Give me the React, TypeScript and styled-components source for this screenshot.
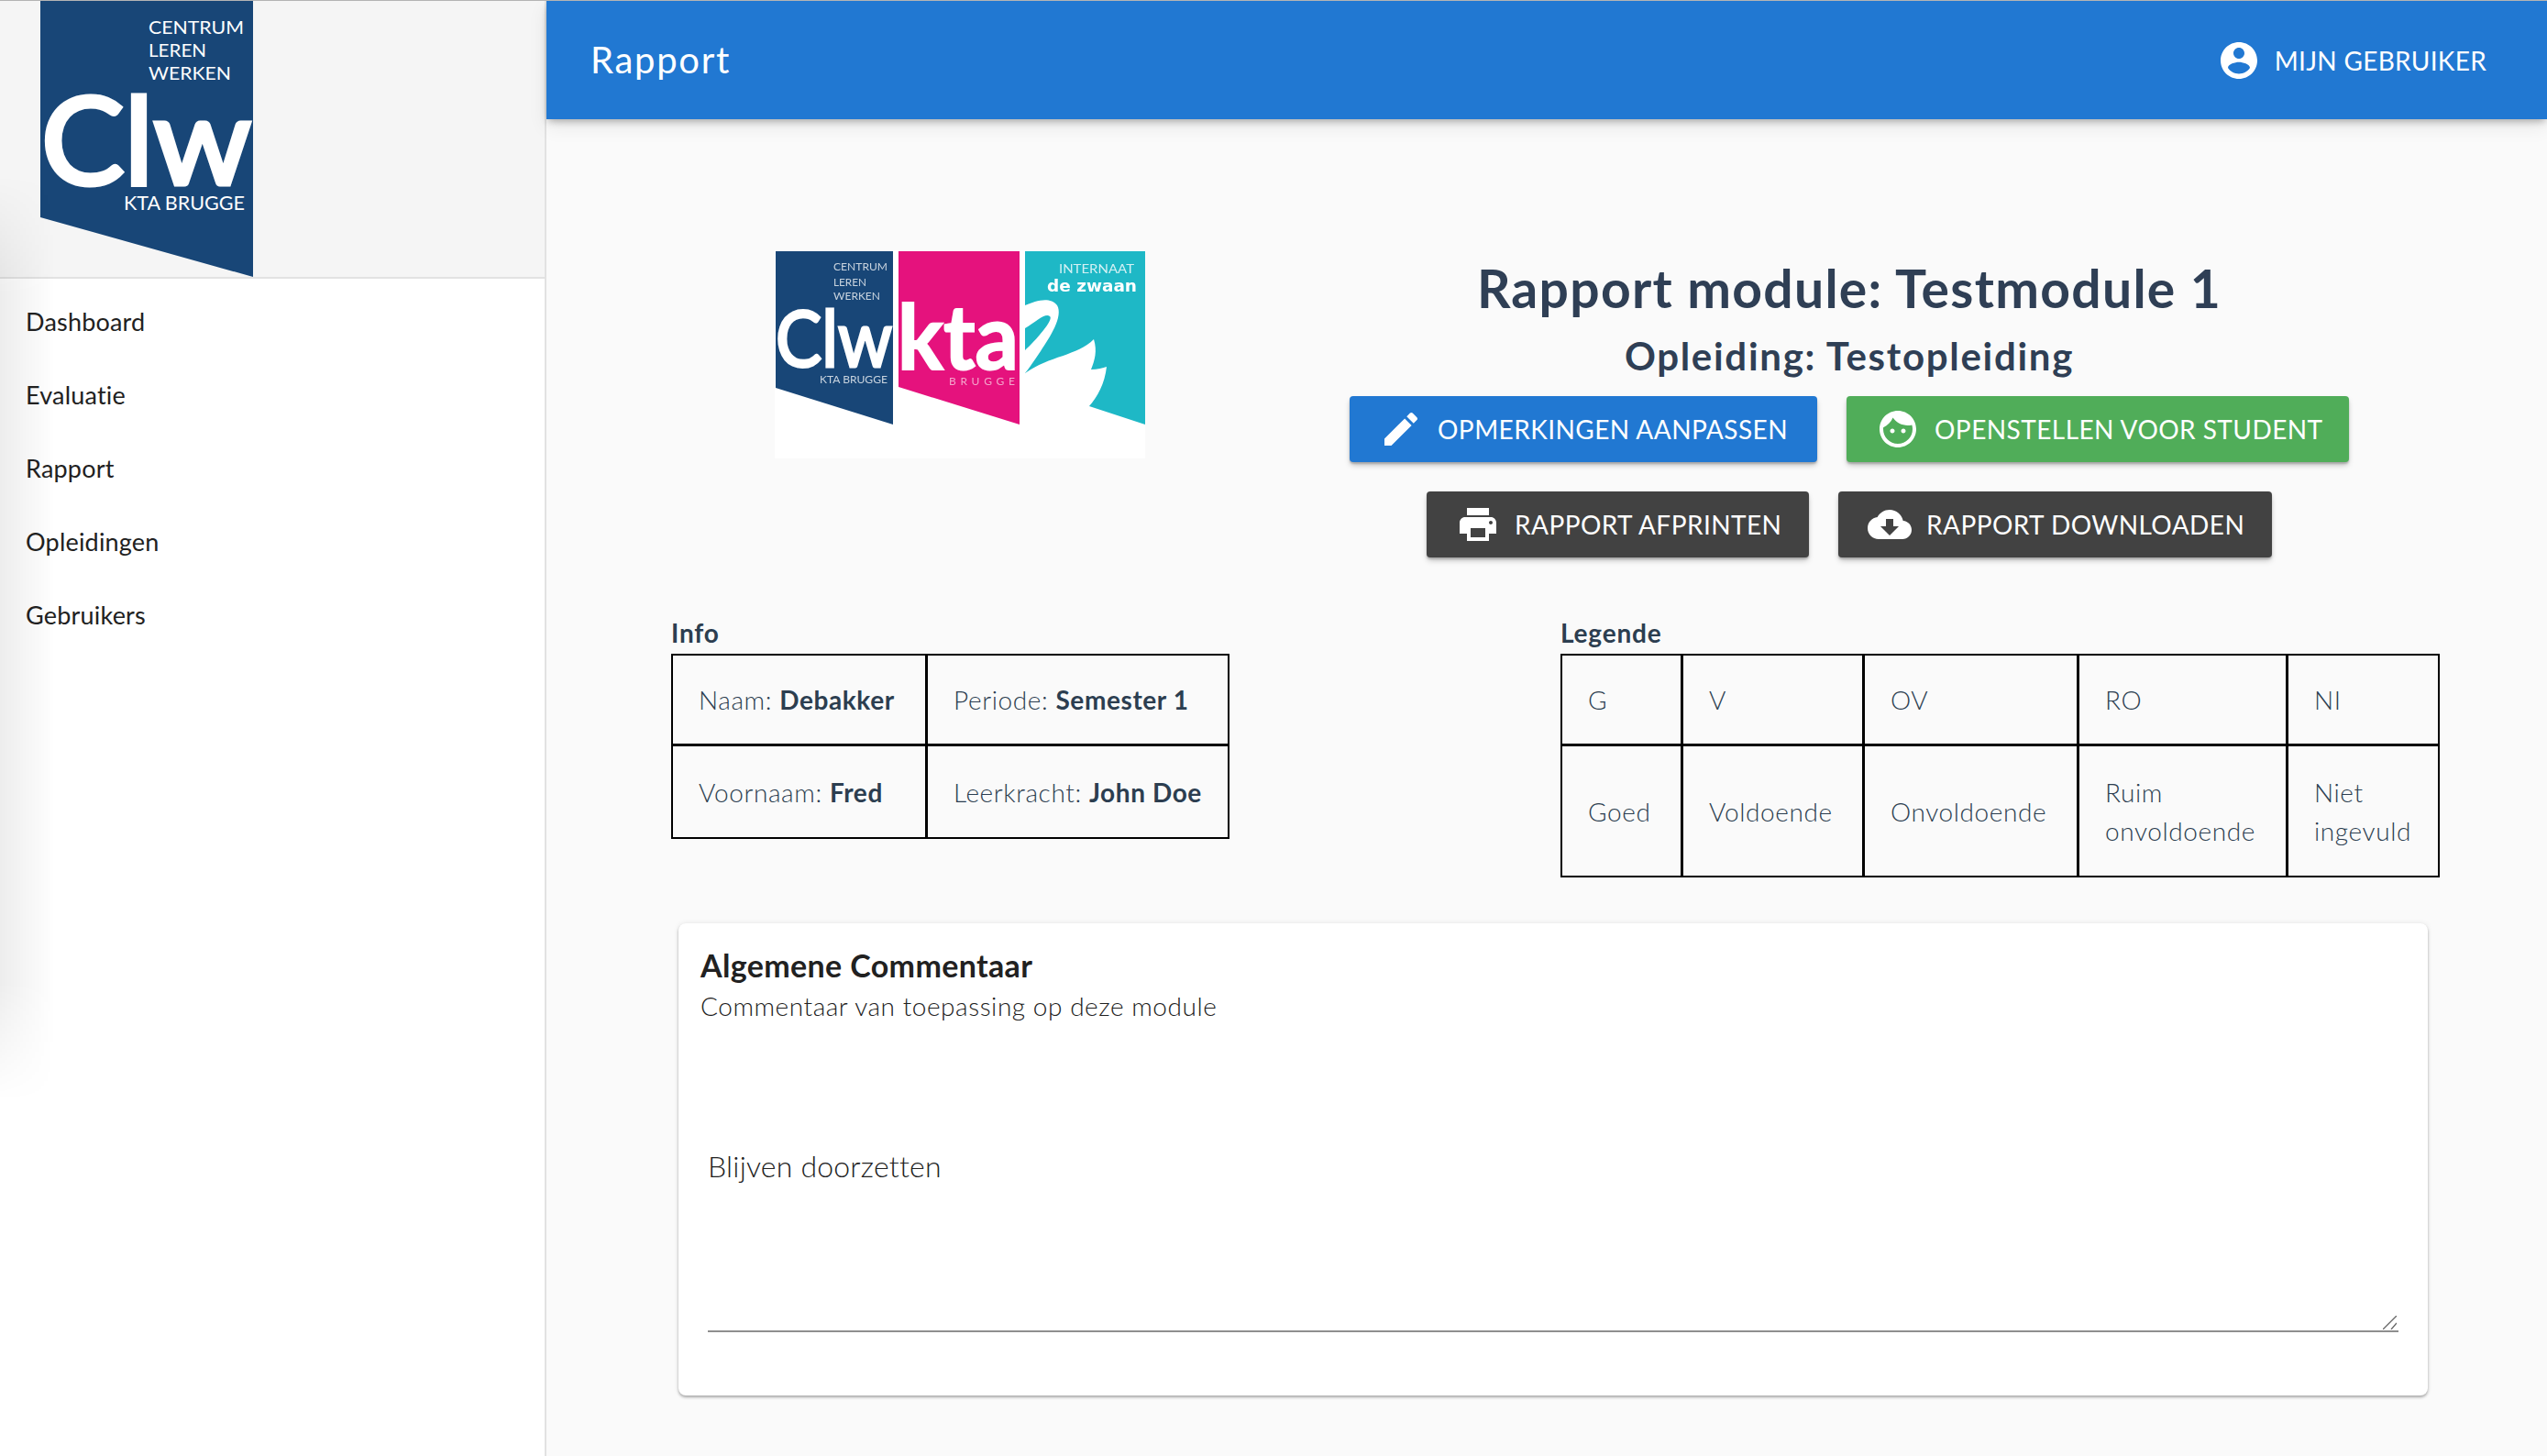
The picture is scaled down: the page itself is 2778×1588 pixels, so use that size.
import React from "react";
import styled, { createGlobalStyle } from "styled-components";

const Global = createGlobalStyle`
  html, body { margin: 0; padding: 0; background: #fafafa; height: 1588px; overflow: hidden; }
  * { box-sizing: border-box; }
  body { font-family: "Lato", "Open Sans", sans-serif; color: #2c3e50; }
`;

const Shell = styled.div`
  display: grid;
  grid-template-columns: 596px 1fr;
  height: 1588px;
  overflow: hidden;
  border-top: 1px solid #b4b4b4;
`;

const Sidebar = styled.aside`
  position: relative;
  background: #fff;
  border-right: 2px solid #e2e2e2;
`;

const SideShade = styled.div`
  position: absolute;
  left: 0;
  top: 190px;
  width: 60px;
  height: 1010px;
  pointer-events: none;
  background: linear-gradient(to right, rgba(0, 0, 0, 0.07), rgba(0, 0, 0, 0));
  mask-image: linear-gradient(to bottom, transparent 0, #000 130px, #000 880px, transparent 100%);
`;

const Brand = styled.div`
  height: 303px;
  padding-left: 44px;
  background: #f5f5f5;
  border-bottom: 2px solid #e2e2e2;
  display: flex;
  align-items: flex-start;
`;

const NavList = styled.nav`
  position: relative;
  display: flex;
  flex-direction: column;
  padding-top: 6px;
`;

const NavItem = styled.a`
  height: 80px;
  padding-left: 28px;
  display: flex;
  align-items: center;
  font-size: 27px;
  letter-spacing: 0.2px;
  color: #212121;
`;

const Main = styled.main`
  display: flex;
  flex-direction: column;
  min-width: 0;
`;

const AppBar = styled.header`
  height: 129px;
  flex: none;
  padding: 0 66px 0 48px;
  display: flex;
  align-items: center;
  justify-content: space-between;
  background: #2178d2;
  color: #fff;
  box-shadow: 0 4px 8px -2px rgba(0, 0, 0, 0.3), 0 8px 20px rgba(0, 0, 0, 0.08);
  position: relative;
`;

const BarTitle = styled.h1`
  margin: 0 0 2px;
  font-size: 40px;
  font-weight: 400;
  letter-spacing: 1.7px;
`;

const UserMenu = styled.div`
  display: flex;
  align-items: center;
  gap: 15px;
  font-size: 28px;
  letter-spacing: 0.3px;
  text-transform: uppercase;
  svg { width: 48px; height: 48px; fill: #fff; }
`;

const Content = styled.div`
  padding: 143px 106px 0 136px;
`;

const TopRow = styled.section`
  display: grid;
  grid-template-columns: 630px 1fr;
`;

const LogoCell = styled.div`
  display: flex;
  justify-content: center;
  align-items: flex-start;
`;

const BigLogo = styled.svg`
  display: block;
  width: 404px;
  height: 227px;
  filter: blur(0.5px);
`;

const Heading = styled.div`
  display: flex;
  flex-direction: column;
  align-items: center;
`;

const Title = styled.h2`
  margin: 0;
  font-size: 57px;
  line-height: 82px;
  font-weight: 700;
  letter-spacing: 1.3px;
  color: #2f3f55;
`;

const SubTitle = styled.h3`
  margin: 0;
  font-size: 42px;
  line-height: 66px;
  font-weight: 700;
  letter-spacing: 1.7px;
  color: #2f3f55;
`;

const ButtonRow = styled.div<{ $first?: boolean }>`
  display: flex;
  justify-content: center;
  gap: 32px;
  margin-top: ${(p) => (p.$first ? 11 : 32)}px;
`;

const colors = { blue: "#2178d2", green: "#50ad59", dark: "#424242" };

const ActionButton = styled.button<{ $tone: keyof typeof colors; $width: number }>`
  height: 72px;
  width: ${(p) => p.$width}px;
  padding: 0 0 0 32px;
  display: flex;
  align-items: center;
  gap: 16px;
  border: 0;
  border-radius: 4px;
  background: ${(p) => colors[p.$tone]};
  color: #fff;
  font: inherit;
  font-size: 28px;
  letter-spacing: 0.45px;
  white-space: nowrap;
  text-transform: uppercase;
  box-shadow: 0 2px 2px rgba(0, 0, 0, 0.18), 0 4px 6px -1px rgba(0, 0, 0, 0.25);
  svg { width: 48px; height: 48px; fill: #fff; flex: none; }
`;

const Tables = styled.section`
  display: grid;
  grid-template-columns: 970px 959px;
  margin-top: 64px;
`;

const TableLabel = styled.div`
  font-size: 28px;
  line-height: 36px;
  margin-bottom: 5px;
  font-weight: 700;
  letter-spacing: 0.8px;
`;

const GridTable = styled.table<{ $width: number }>`
  width: ${(p) => p.$width}px;
  table-layout: fixed;
  border-collapse: separate;
  border-spacing: 0;
  border: 2px solid #000;
  font-size: 28px;
  line-height: 42px;
  letter-spacing: 0.6px;
  font-weight: 300;
  color: #2c3e50;
`;

const Cell = styled.td`
  padding: 0 28px 0 28px;
  border-right: 3px solid #000;
  border-bottom: 3px solid #000;
  tr:last-child > & { border-bottom: 0; }
  &:last-child { border-right: 0; }
  b { font-weight: 700; }
`;

const Row = styled.tr<{ $height: number }>`
  height: ${(p) => p.$height}px;
`;

const Col = styled.col<{ $width: number }>`
  width: ${(p) => p.$width}px;
`;

const Card = styled.section`
  margin: 50px 24px 0 8px;
  height: 515px;
  padding: 24px 32px 0 24px;
  background: #fff;
  border-radius: 8px;
  box-shadow: 0 2px 3px rgba(0, 0, 0, 0.3), 0 0 6px rgba(0, 0, 0, 0.08);
`;

const CardTitle = styled.div`
  font-size: 34px;
  line-height: 44px;
  font-weight: 700;
  letter-spacing: 0.35px;
  color: #212121;
`;

const CardSub = styled.div`
  font-size: 28px;
  line-height: 44px;
  letter-spacing: 0.55px;
  font-weight: 300;
  color: #212121;
`;

const RemarkField = styled.div`
  position: relative;
  margin: 131px 0 0 8px;
`;

const Remark = styled.textarea`
  display: block;
  width: 100%;
  height: 203px;
  padding: 0;
  border: 0;
  border-bottom: 2px solid #8f8f8f;
  outline: 0;
  background: transparent;
  resize: none;
  font-family: inherit;
  font-size: 32px;
  font-weight: 300;
  line-height: 44px;
  letter-spacing: 0.2px;
  color: #212121;
`;

const Grip = styled.svg`
  position: absolute;
  right: 2px;
  bottom: 3px;
  width: 15px;
  height: 15px;
  stroke: #666;
  stroke-width: 1.3;
  pointer-events: none;
`;

const SmallLogo = () => (
  <svg width="232" height="302" viewBox="0 0 232 302">
    <defs>
      <clipPath id="clw-shape">
        <polygon points="0,0 232,0 232,301 0,236" />
      </clipPath>
    </defs>
    <g clipPath="url(#clw-shape)" fontFamily="Lato, sans-serif" fill="#fff">
      <rect width="232" height="302" fill="#184677" />
      <text x="118" y="36" fontSize="20" textLength="104" lengthAdjust="spacingAndGlyphs">CENTRUM</text>
      <text x="118" y="61" fontSize="20" textLength="63" lengthAdjust="spacingAndGlyphs">LEREN</text>
      <text x="118" y="86" fontSize="20" textLength="90" lengthAdjust="spacingAndGlyphs">WERKEN</text>
      <text x="1" y="200" fontSize="132" fontWeight="400" stroke="#fff" strokeWidth="5" textLength="229" lengthAdjust="spacingAndGlyphs">Clw</text>
      <text x="91" y="228" fontSize="22" textLength="132" lengthAdjust="spacingAndGlyphs">KTA BRUGGE</text>
    </g>
  </svg>
);

const TripleLogo = () => (
  <BigLogo viewBox="0 0 404 227">
    <rect width="404" height="227" fill="#fff" />
    <polygon points="1,1 129,1 129,190 1,150" fill="#184677" />
    <polygon points="135,1 267,1 267,190 135,149" fill="#e5127d" />
    <polygon points="273,1 404,1 404,190 343,170 273,150" fill="#1eb8c6" />
    <path fill="#fff" d="M273 134 C 300 115, 330 115, 348 97 C 352 110, 349 120, 345 130 C 352 130, 358 128, 362 127 C 360 145, 352 160, 343 170 L 300 190 L 273 190 Z" />
    <path fill="#fff" d="M273 60 C 285 55, 300 50, 308 60 C 315 72, 300 95, 290 110 C 283 120, 278 128, 273 134 L 273 109 C 285 98, 305 75, 300 72 C 295 68, 285 78, 273 85 Z" />
    <g fontFamily="Lato, sans-serif" fill="#fff">
      <g fill="#c8d3de">
        <text x="64" y="22" fontSize="11" textLength="59" lengthAdjust="spacingAndGlyphs">CENTRUM</text>
        <text x="64" y="39" fontSize="11" textLength="36" lengthAdjust="spacingAndGlyphs">LEREN</text>
        <text x="64" y="54" fontSize="11" textLength="51" lengthAdjust="spacingAndGlyphs">WERKEN</text>
        <text x="49" y="145" fontSize="12" textLength="74" lengthAdjust="spacingAndGlyphs">KTA BRUGGE</text>
      </g>
      <text x="1" y="127" fontSize="85" stroke="#fff" strokeWidth="3" textLength="127" lengthAdjust="spacingAndGlyphs">Clw</text>
      <text x="134" y="130" fontSize="97" fontWeight="700" stroke="#fff" strokeWidth="2" textLength="132" lengthAdjust="spacingAndGlyphs">kta</text>
      <text x="190" y="147" fontSize="12" fill="#f4a6cc" textLength="72" lengthAdjust="spacing">BRUGGE</text>
      <text x="310" y="25" fontSize="14" fill="#d4f1f4" textLength="82" lengthAdjust="spacingAndGlyphs">INTERNAAT</text>
      <text x="297" y="45" fontSize="18" fontFamily="DejaVu Sans, sans-serif" fontWeight="700" textLength="98" lengthAdjust="spacingAndGlyphs">de zwaan</text>
    </g>
  </BigLogo>
);

const icons = {
  edit: "M3 17.25V21h3.75L17.81 9.94l-3.75-3.75L3 17.25zM20.71 7.04c.39-.39.39-1.02 0-1.41l-2.34-2.34c-.39-.39-1.02-.39-1.41 0l-1.83 1.83 3.75 3.75 1.83-1.83z",
  face: "M9 11.75c-.69 0-1.25.56-1.25 1.25s.56 1.25 1.25 1.25 1.25-.56 1.25-1.25-.56-1.25-1.25-1.25zm6 0c-.69 0-1.25.56-1.25 1.25s.56 1.25 1.25 1.25 1.25-.56 1.25-1.25-.56-1.25-1.25-1.25zM12 2C6.48 2 2 6.48 2 12s4.48 10 10 10 10-4.48 10-10S17.52 2 12 2zm0 18c-4.41 0-8-3.59-8-8 0-.29.02-.58.05-.86 2.36-1.05 4.23-2.98 5.21-5.37C11.07 8.33 14.05 10 17.42 10c.78 0 1.53-.09 2.25-.26.21.71.33 1.47.33 2.26 0 4.41-3.59 8-8 8z",
  print: "M19 8H5c-1.66 0-3 1.34-3 3v6h4v4h12v-4h4v-6c0-1.66-1.34-3-3-3zm-3 11H8v-5h8v5zm3-7c-.55 0-1-.45-1-1s.45-1 1-1 1 .45 1 1-.45 1-1 1zm-1-9H6v4h12V3z",
  cloud: "M19.35 10.04C18.67 6.59 15.64 4 12 4 9.11 4 6.6 5.64 5.35 8.04 2.34 8.36 0 10.91 0 14c0 3.31 2.69 6 6 6h13c2.76 0 5-2.24 5-5 0-2.64-2.05-4.78-4.65-4.96zM17 13l-5 5-5-5h3V9h4v4h3z",
  account: "M12 2C6.48 2 2 6.48 2 12s4.48 10 10 10 10-4.48 10-10S17.52 2 12 2zm0 3c1.66 0 3 1.34 3 3s-1.34 3-3 3-3-1.34-3-3 1.34-3 3-3zm0 14.2c-2.5 0-4.71-1.28-6-3.22.03-1.99 4-3.08 6-3.08 1.99 0 5.97 1.09 6 3.08-1.29 1.94-3.5 3.22-6 3.22z",
};

const Icon = ({ name }: { name: keyof typeof icons }) => (
  <svg viewBox="0 0 24 24"><path d={icons[name]} /></svg>
);

const navItems = ["Dashboard", "Evaluatie", "Rapport", "Opleidingen", "Gebruikers"];

const legend = [
  ["G", "Goed", 132],
  ["V", "Voldoende", 198],
  ["OV", "Onvoldoende", 234],
  ["RO", "Ruim onvoldoende", 228],
  ["NI", "Niet ingevuld", 163],
] as const;

export default function App() {
  return (
    <>
      <Global />
      <Shell>
        <Sidebar>
          <Brand><SmallLogo /></Brand>
          <SideShade />
          <NavList>
            {navItems.map((item) => <NavItem key={item}>{item}</NavItem>)}
          </NavList>
        </Sidebar>
        <Main>
          <AppBar>
            <BarTitle>Rapport</BarTitle>
            <UserMenu><Icon name="account" />Mijn gebruiker</UserMenu>
          </AppBar>
          <Content>
            <TopRow>
              <LogoCell><TripleLogo /></LogoCell>
              <Heading>
                <Title>Rapport module: Testmodule 1</Title>
                <SubTitle>Opleiding: Testopleiding</SubTitle>
                <ButtonRow $first>
                  <ActionButton $tone="blue" $width={510}><Icon name="edit" />Opmerkingen aanpassen</ActionButton>
                  <ActionButton $tone="green" $width={548}><Icon name="face" />Openstellen voor student</ActionButton>
                </ButtonRow>
                <ButtonRow>
                  <ActionButton $tone="dark" $width={417}><Icon name="print" />Rapport afprinten</ActionButton>
                  <ActionButton $tone="dark" $width={473}><Icon name="cloud" />Rapport downloaden</ActionButton>
                </ButtonRow>
              </Heading>
            </TopRow>
            <Tables>
              <div>
                <TableLabel>Info</TableLabel>
                <GridTable $width={609}>
                  <colgroup><Col $width={278} /><Col $width={327} /></colgroup>
                  <tbody>
                    <Row $height={99}>
                      <Cell>Naam: <b>Debakker</b></Cell>
                      <Cell>Periode: <b>Semester 1</b></Cell>
                    </Row>
                    <Row $height={99}>
                      <Cell>Voornaam: <b>Fred</b></Cell>
                      <Cell>Leerkracht: <b>John Doe</b></Cell>
                    </Row>
                  </tbody>
                </GridTable>
              </div>
              <div>
                <TableLabel>Legende</TableLabel>
                <GridTable $width={959}>
                  <colgroup>{legend.map(([k, , w]) => <Col key={k} $width={w} />)}</colgroup>
                  <tbody>
                    <Row $height={99}>{legend.map(([k]) => <Cell key={k}>{k}</Cell>)}</Row>
                    <Row $height={141}>{legend.map(([k, v]) => <Cell key={k}>{v}</Cell>)}</Row>
                  </tbody>
                </GridTable>
              </div>
            </Tables>
            <Card>
              <CardTitle>Algemene Commentaar</CardTitle>
              <CardSub>Commentaar van toepassing op deze module</CardSub>
              <RemarkField>
                <Remark defaultValue="Blijven doorzetten" />
                <Grip viewBox="0 0 15 15">
                  <path d="M0 15 L15 0 M9 15 L15 8" />
                </Grip>
              </RemarkField>
            </Card>
          </Content>
        </Main>
      </Shell>
    </>
  );
}
